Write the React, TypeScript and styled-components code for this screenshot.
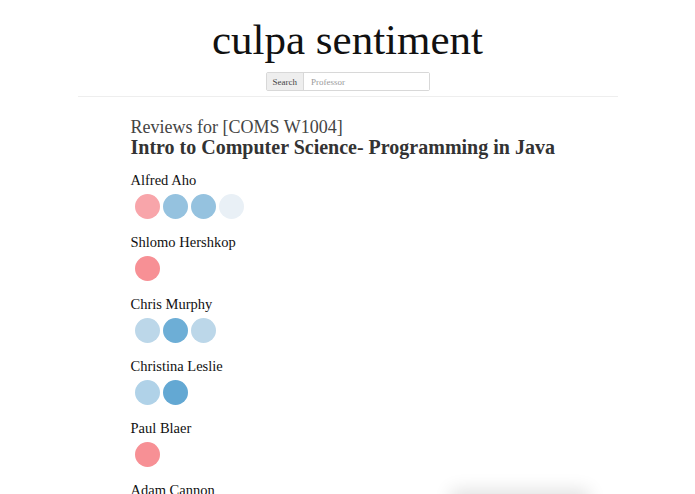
import styled, { createGlobalStyle } from 'styled-components';

type Professor = {
  name: string;
  reviews: string[];
}

const professors: Professor[] = [
  { name: 'Alfred Aho', reviews: ['#f8a5aa', '#95c2df', '#95c2df', '#e9f0f6'] },
  { name: 'Shlomo Hershkop', reviews: ['#f79095'] },
  { name: 'Chris Murphy', reviews: ['#bcd7e9', '#6daed6', '#bcd7e9'] },
  { name: 'Christina Leslie', reviews: ['#b0d2e8', '#63a8d3'] },
  { name: 'Paul Blaer', reviews: ['#f79095'] },
  { name: 'Adam Cannon', reviews: [] },
];

const GlobalStyle = createGlobalStyle`
  html, body {
    margin: 0;
    padding: 0;
    background: #fff;
    font-family: 'Liberation Serif', 'DejaVu Serif', serif;
    overflow: hidden;
  }
`;

const Header = styled.header`
  width: 540px;
  margin: 0 auto;
  padding-top: 15px;
  padding-bottom: 5px;
  border-bottom: 1px solid #eeeeee;
  display: flex;
  flex-direction: column;
  align-items: center;
`;

const Logo = styled.h1`
  margin: 0;
  font-weight: 400;
  font-size: 43px;
  line-height: 49px;
  color: #111;
`;

const Search = styled.div`
  margin-top: 8px;
  display: flex;
  width: 164px;
  height: 19px;
  border: 1px solid #d8d8d8;
  border-radius: 2px;
  box-sizing: border-box;
`;

const SearchLabel = styled.span`
  display: flex;
  align-items: center;
  padding: 0 6px;
  background: #eeeeee;
  border-right: 1px solid #d8d8d8;
  color: #444;
  font-size: 9px;
`;

const SearchInput = styled.input`
  flex: 1;
  min-width: 0;
  border: none;
  outline: none;
  padding: 0 7px;
  font-family: 'Liberation Serif', serif;
  font-size: 9px;
  color: #333;

  &::placeholder {
    color: #9a9a9a;
  }
`;

const Content = styled.main`
  width: 540px;
  margin: 0 auto;
  padding: 21px 0 0 53px;
  box-sizing: border-box;
`;

const Subtitle = styled.h2`
  margin: 0;
  font-weight: 400;
  font-size: 18px;
  line-height: 19px;
  color: #444;
`;

const Course = styled.h3`
  margin: 0 0 14px;
  font-weight: 700;
  font-size: 20px;
  line-height: 20px;
  color: #333;
`;

const ProfessorRow = styled.section`
  height: 62px;
`;

const Name = styled.div`
  font-size: 14.5px;
  line-height: 18px;
  color: #111;
`;

const Dots = styled.div`
  display: flex;
  gap: 3px;
  margin-top: 5px;
  padding-left: 4px;
`;

const Dot = styled.span<{ $color: string }>`
  width: 25px;
  height: 25px;
  border-radius: 50%;
  background: ${(p) => p.$color};
`;

const Shadow = styled.div`
  position: fixed;
  left: 455px;
  bottom: -30px;
  width: 130px;
  height: 30px;
  box-shadow: 0 0 18px 4px rgba(0, 0, 0, 0.12);
`;

const App = () => {
  return (
    <>
      <GlobalStyle />
      <Header>
        <Logo>culpa sentiment</Logo>
        <Search>
          <SearchLabel>Search</SearchLabel>
          <SearchInput type="text" placeholder="Professor" />
        </Search>
      </Header>
      <Content>
        <Subtitle>Reviews for [COMS W1004]</Subtitle>
        <Course>Intro to Computer Science- Programming in Java</Course>
        {professors.map((p) => (
          <ProfessorRow key={p.name}>
            <Name>{p.name}</Name>
            <Dots>
              {p.reviews.map((c, i) => (
                <Dot key={i} $color={c} />
              ))}
            </Dots>
          </ProfessorRow>
        ))}
      </Content>
      <Shadow />
    </>
  );
}

export default App;
